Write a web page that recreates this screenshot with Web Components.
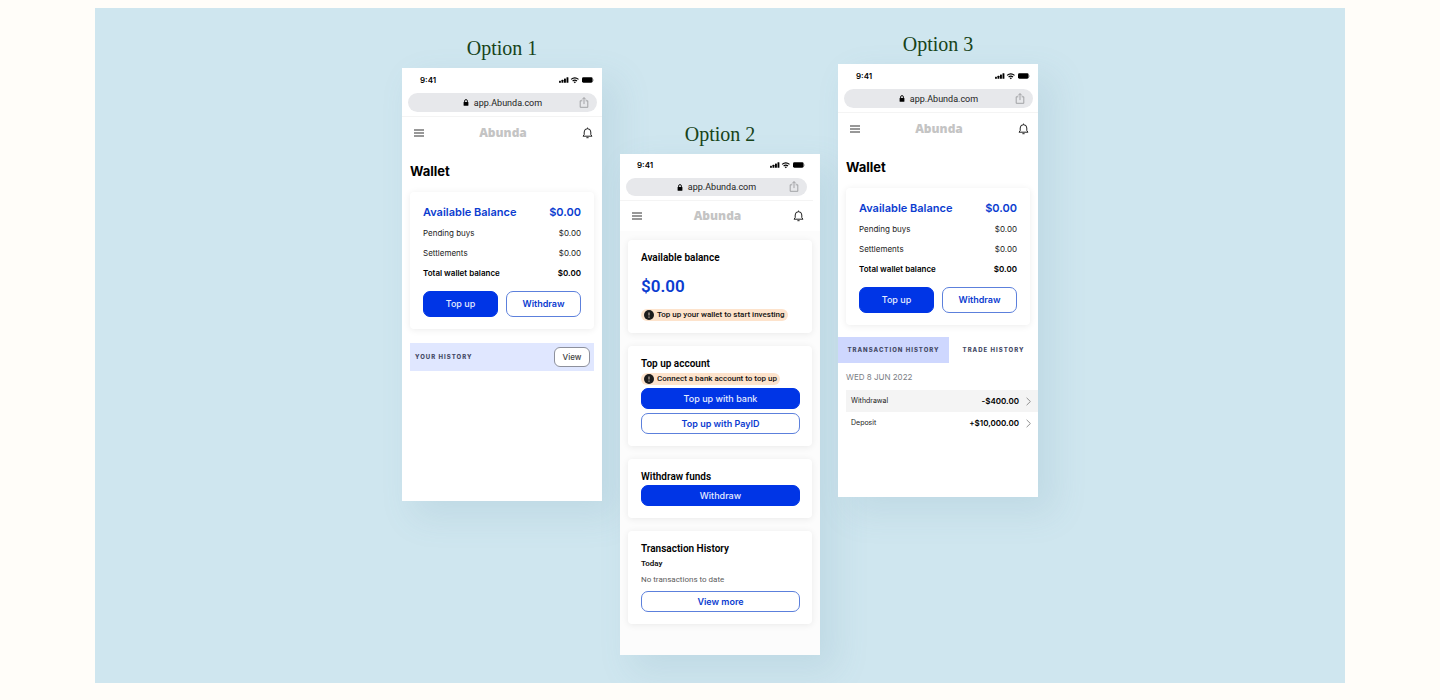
<!DOCTYPE html>
<html lang="en">
<head>
<meta charset="utf-8">
<meta name="viewport" content="width=device-width, initial-scale=1">
<title>Abunda wallet options</title>
<style>
  html { background: #fffdf9; }
  body { margin: 0; min-height: 100vh; display: flex; font-family: Inter, "Liberation Sans", sans-serif; color: #111; }
</style>
</head>
<body>
<option-board>
  <option-column label="Option 1" style="--drop: 20px">
    <phone-frame>
      <page-title>Wallet</page-title>
      <wallet-card></wallet-card>
      <history-bar></history-bar>
    </phone-frame>
  </option-column>
  <option-column label="Option 2" style="--drop: 106px">
    <phone-frame compact>
      <card-stack>
        <info-card heading="Available balance">
          <balance-amount>$0.00</balance-amount>
          <notice-pill style="--above: 12px">Top up your wallet to start investing</notice-pill>
        </info-card>
        <info-card heading="Top up account">
          <notice-pill>Connect a bank account to top up</notice-pill>
          <action-button kind="solid">Top up with bank</action-button>
          <action-button style="--above: 4px">Top up with PayID</action-button>
        </info-card>
        <info-card heading="Withdraw funds">
          <action-button kind="solid" style="--above: 1px">Withdraw</action-button>
        </info-card>
        <info-card heading="Transaction History">
          <empty-history></empty-history>
          <action-button style="--above: 5px">View more</action-button>
        </info-card>
      </card-stack>
    </phone-frame>
  </option-column>
  <option-column label="Option 3" style="--drop: 16px">
    <phone-frame>
      <page-title>Wallet</page-title>
      <wallet-card></wallet-card>
      <history-tabs></history-tabs>
      <transaction-list></transaction-list>
    </phone-frame>
  </option-column>
</option-board>

<script>
const define = (name, html, setup) => {
  const template = document.createElement('template');
  template.innerHTML = html;
  customElements.define(name, class extends HTMLElement {
    constructor() {
      super();
      this.attachShadow({ mode: 'open' }).append(template.content.cloneNode(true));
    }
    connectedCallback() { if (setup) setup(this, this.shadowRoot); }
  });
};

define('option-board', `
<style>
  :host { flex: 1; min-width: 0; box-sizing: border-box; display: block; margin: 8px clamp(0px, 7vw, 95px) 17px; background: #cfe6ef; overflow: hidden; }
  main { display: flex; flex-wrap: wrap; justify-content: center; align-items: flex-start; gap: 18px; padding-bottom: 28px; }
</style>
<main><slot></slot></main>`);

define('option-column', `
<style>
  :host { display: block; width: 200px; margin-top: var(--drop, 0px); }
  h2 { margin: 0; font: 400 20px/40px "Liberation Serif", serif; text-align: center; color: #174319; }
</style>
<section><h2></h2><slot></slot></section>`, (el, root) => {
  root.querySelector('h2').textContent = el.getAttribute('label');
});

define('phone-frame', `
<style>
  :host { display: block; box-sizing: border-box; min-height: 433px; background: #fff; box-shadow: 14px 14px 32px 2px rgba(90, 140, 160, .13); }
  :host([compact]) { min-height: 501px; background: #fcfcfc; }
  header { background: #fff; }
  :host([compact]) header { padding-right: 7px; }
</style>
<header><status-bar></status-bar><address-bar></address-bar><nav-bar></nav-bar></header>
<slot></slot>`, (el, root) => {
  if (el.hasAttribute('compact'))
    for (const part of root.querySelector('header').children) part.setAttribute('compact', '');
});

define('status-bar', `
<style>
  :host { display: flex; align-items: center; justify-content: space-between; box-sizing: border-box; height: 24px; padding: 0 8px 0 18px; font: 600 8px/12px Inter, sans-serif; color: #000; }
  :host([compact]) { height: 22px; padding-left: 17px; }
  svg { display: block; }
</style>
<span>9:41</span>
<svg width="35" height="8" viewBox="0 0 35 8" aria-hidden="true">
  <g fill="#000"><rect x="0" y="4.8" width="1.9" height="2" rx=".4"/><rect x="2.5" y="3.8" width="1.9" height="3" rx=".4"/><rect x="5" y="2.5" width="1.9" height="4.3" rx=".4"/><rect x="7.5" y="1.2" width="1.9" height="5.6" rx=".4"/></g>
  <g fill="none" stroke="#000" stroke-width="1.2"><path d="M12.1 3.4Q15.8 .4 19.5 3.4"/><path d="M13.6 5Q15.8 3.3 18 5"/></g>
  <path d="M14.6 6Q15.8 5.1 17 6L15.8 7.2Z" fill="#000"/>
  <rect x="23" y="1.3" width="10.6" height="5.4" rx="1.4" fill="#000"/><path d="M34.2 3v2.2q.7-.3.7-1.1t-.7-1.1" fill="#999"/>
</svg>`);

define('address-bar', `
<style>
  :host { display: block; padding: 1px 5px 4px 6px; border-bottom: 1px solid #f4f4f4; }
  :host([compact]) { padding: 2px 6px 4px; }
  div { display: grid; grid-template-columns: 1fr auto 1fr; align-items: center; height: 19px; border-radius: 10px; background: #e7e8eb; }
  :host([compact]) div { height: 18px; }
  button { border: 0; margin: 0; padding: 0; background: none; color: inherit; cursor: pointer; }
  .url { grid-column: 2; display: flex; align-items: center; gap: 5px; font: 400 9px/12px Roboto, sans-serif; color: #222; }
  .share { justify-self: end; margin-right: 8px; }
  svg { display: block; }
</style>
<div>
  <button class="url" type="button">
    <svg width="6" height="7" viewBox="0 0 6 7" aria-hidden="true"><rect x=".6" y="3" width="4.8" height="3.8" rx=".6" fill="#000"/><path d="M1.6 3.2V2a1.4 1.4 0 0 1 2.8 0v1.2" fill="none" stroke="#000" stroke-width=".9"/></svg>
    <span>app.Abunda.com</span>
  </button>
  <button class="share" type="button" aria-label="Share">
    <svg width="10" height="12" viewBox="0 0 10 12" fill="none" stroke="#9a9b9e" stroke-width=".9"><path d="M3.3 3.8H1.2v6.5h7.6V3.8H6.7M5 7.1V.7M3.1 2.5 5 .6 6.9 2.5"/></svg>
  </button>
</div>`);

define('nav-bar', `
<style>
  :host { display: grid; grid-template-columns: 1fr auto 1fr; align-items: center; box-sizing: border-box; height: 32px; padding: 0 9px 0 11px; }
  :host([compact]) { height: 30px; }
  button { border: 0; margin: 0; padding: 0; background: none; cursor: pointer; justify-self: start; }
  button:last-child { justify-self: end; }
  svg { display: block; }
  a { font: 800 12px/18px "Open Sans", sans-serif; color: #c4c4c4; text-decoration: none; }
</style>
<button type="button" aria-label="Menu"><svg width="12" height="10" viewBox="0 0 12 10" stroke="#333" stroke-width="1.1"><path d="M1 2h10M1 5h10M1 8h10"/></svg></button>
<a href="#">Abunda</a>
<button type="button" aria-label="Notifications"><svg width="11" height="12" viewBox="0 0 11 12" fill="none" stroke="#222" stroke-width="1" stroke-linejoin="round"><path d="M1 9.2h9L8.8 7.6V5a3.3 3.3 0 0 0-6.6 0v2.6ZM5.5 1.7V.6M4.4 10.7h2.2"/></svg></button>`);

define('page-title', `
<style>
  :host { display: block; padding: 13px 8px 12px; }
  h1 { margin: 0; font: 700 13px/18px Inter, sans-serif; color: #000; }
</style>
<h1><slot></slot></h1>`);

define('wallet-card', `
<style>
  :host { display: block; margin: 0 8px; padding: 12px 13px; border-radius: 4px; background: #fff; box-shadow: 0 1px 7px rgba(0, 0, 0, .08); }
  table { width: 100%; border-collapse: collapse; font: 400 8px/20px Inter, sans-serif; color: #222; }
  th, td { padding: 0; font-weight: inherit; text-align: left; }
  td { text-align: right; }
  .lead { font-size: 11px; line-height: 16px; font-weight: 600; color: #0b3cd0; }
  .lead th, .lead td { padding-bottom: 3px; }
  .total { font-weight: 600; color: #000; }
  div { display: grid; grid-template-columns: 1fr 1fr; gap: 8px; margin-top: 8px; }
</style>
<table>
  <tr class="lead"><th scope="row">Available Balance</th><td>$0.00</td></tr>
  <tr><th scope="row">Pending buys</th><td>$0.00</td></tr>
  <tr><th scope="row">Settlements</th><td>$0.00</td></tr>
  <tr class="total"><th scope="row">Total wallet balance</th><td>$0.00</td></tr>
</table>
<div>
  <action-button kind="solid" style="--above: 0px; --tall: 26px">Top up</action-button>
  <action-button style="--above: 0px; --tall: 26px">Withdraw</action-button>
</div>`);

define('action-button', `
<style>
  :host { display: block; margin-top: var(--above, 3px); }
  button { display: block; box-sizing: border-box; width: 100%; height: var(--tall, 21px); margin: 0; padding: 0; border: 1px solid #5c80dc; border-radius: 7px; background: #fff; color: #0b3cd0; font: 600 9px/12px Inter, sans-serif; cursor: pointer; }
  :host([kind=solid]) button { border-color: #0035e6; background: #0035e6; color: #e6ecff; font-weight: 500; }
</style>
<button type="button"><slot></slot></button>`);

define('history-bar', `
<style>
  :host { display: flex; align-items: center; justify-content: space-between; box-sizing: border-box; height: 28px; margin: 14px 8px 0; padding: 0 4px 0 5px; background: #e0e7ff; }
  h2 { margin: 0; font: 800 6px/12px Inter, sans-serif; letter-spacing: 1px; color: #454a66; }
  button { box-sizing: border-box; width: 36px; height: 20px; padding: 0; border: 1px solid #8d909c; border-radius: 6px; background: #fff; color: #444; font: 500 8px/12px Inter, sans-serif; cursor: pointer; }
</style>
<h2>YOUR HISTORY</h2><button type="button">View</button>`);

define('card-stack', `
<style>:host { display: flex; flex-direction: column; gap: 13px; padding: 9px 8px 31px; }</style>
<slot></slot>`);

define('info-card', `
<style>
  :host { display: block; padding: 11px 12px 12px 13px; border-radius: 4px; background: #fff; box-shadow: 0 1px 7px rgba(0, 0, 0, .08); }
  h2 { margin: 0; font: 600 10px/14px Roboto, sans-serif; color: #000; }
</style>
<h2></h2><slot></slot>`, (el, root) => {
  root.querySelector('h2').textContent = el.getAttribute('heading');
});

define('balance-amount', `
<style>:host { display: block; margin-top: 10px; font: 600 17px/22px Roboto, sans-serif; color: #0b3cd0; }</style>
<slot></slot>`);

define('notice-pill', `
<style>
  :host { display: flex; align-items: center; gap: 3px; width: max-content; height: 12px; margin-top: var(--above, 2px); padding: 0 3px; border-radius: 6px; background: #fde3cc; font: 500 8px/12px Roboto, sans-serif; color: #111; }
  svg { display: block; }
</style>
<svg width="10" height="10" viewBox="0 0 10 10" aria-hidden="true"><circle cx="5" cy="5" r="5" fill="#1c1c1c"/><path d="M5 2.4v3.2M5 6.6v1.1" stroke="#c9b9aa" stroke-width="1.1"/></svg>
<span><slot></slot></span>`);

define('empty-history', `
<style>
  h3 { margin: 2px 0 4px; font: 600 8px/12px Roboto, sans-serif; color: #111; }
  p { margin: 0; font: 400 8px/12px Roboto, sans-serif; color: #5c5c5c; }
  :host { display: flow-root; }
</style>
<h3>Today</h3><p>No transactions to date</p>`);

define('history-tabs', `
<style>
  :host { display: block; margin-top: 12px; }
  div { display: grid; grid-template-columns: 5fr 4fr; }
  button { height: 26px; margin: 0; padding: 0; border: 0; background: none; font: 800 6px/12px Inter, sans-serif; letter-spacing: 1px; color: #454a66; white-space: nowrap; cursor: pointer; }
  button[aria-selected=true] { background: #ced7fe; }
</style>
<div role="tablist">
  <button type="button" role="tab" aria-selected="true">TRANSACTION HISTORY</button>
  <button type="button" role="tab" aria-selected="false">TRADE HISTORY</button>
</div>`);

define('transaction-list', `
<style>
  :host { display: block; padding: 8px 0 0 8px; }
  h3 { margin: 0 0 7px; font: 400 8px/12px Inter, sans-serif; color: #7b7e85; }
  ul { margin: 0; padding: 0; list-style: none; }
  a { display: flex; align-items: center; height: 22px; padding: 0 7px 0 5px; font: 400 7px/12px Inter, sans-serif; color: #222; text-decoration: none; }
  li:first-child a { background: #f4f4f4; }
  b { margin-left: auto; margin-right: 7px; font-weight: 600; color: #000; font-size: 8px; }
  svg { display: block; }
</style>
<h3>WED 8 JUN 2022</h3>
<ul>
  <li><a href="#"><span>Withdrawal</span><b>-$400.00</b><svg width="5" height="9" viewBox="0 0 5 9" fill="none" stroke="#777" stroke-width=".8" aria-hidden="true"><path d="M.6.8 4.4 4.5.6 8.2"/></svg></a></li>
  <li><a href="#"><span>Deposit</span><b>+$10,000.00</b><svg width="5" height="9" viewBox="0 0 5 9" fill="none" stroke="#777" stroke-width=".8" aria-hidden="true"><path d="M.6.8 4.4 4.5.6 8.2"/></svg></a></li>
</ul>`);
</script>
</body>
</html>
